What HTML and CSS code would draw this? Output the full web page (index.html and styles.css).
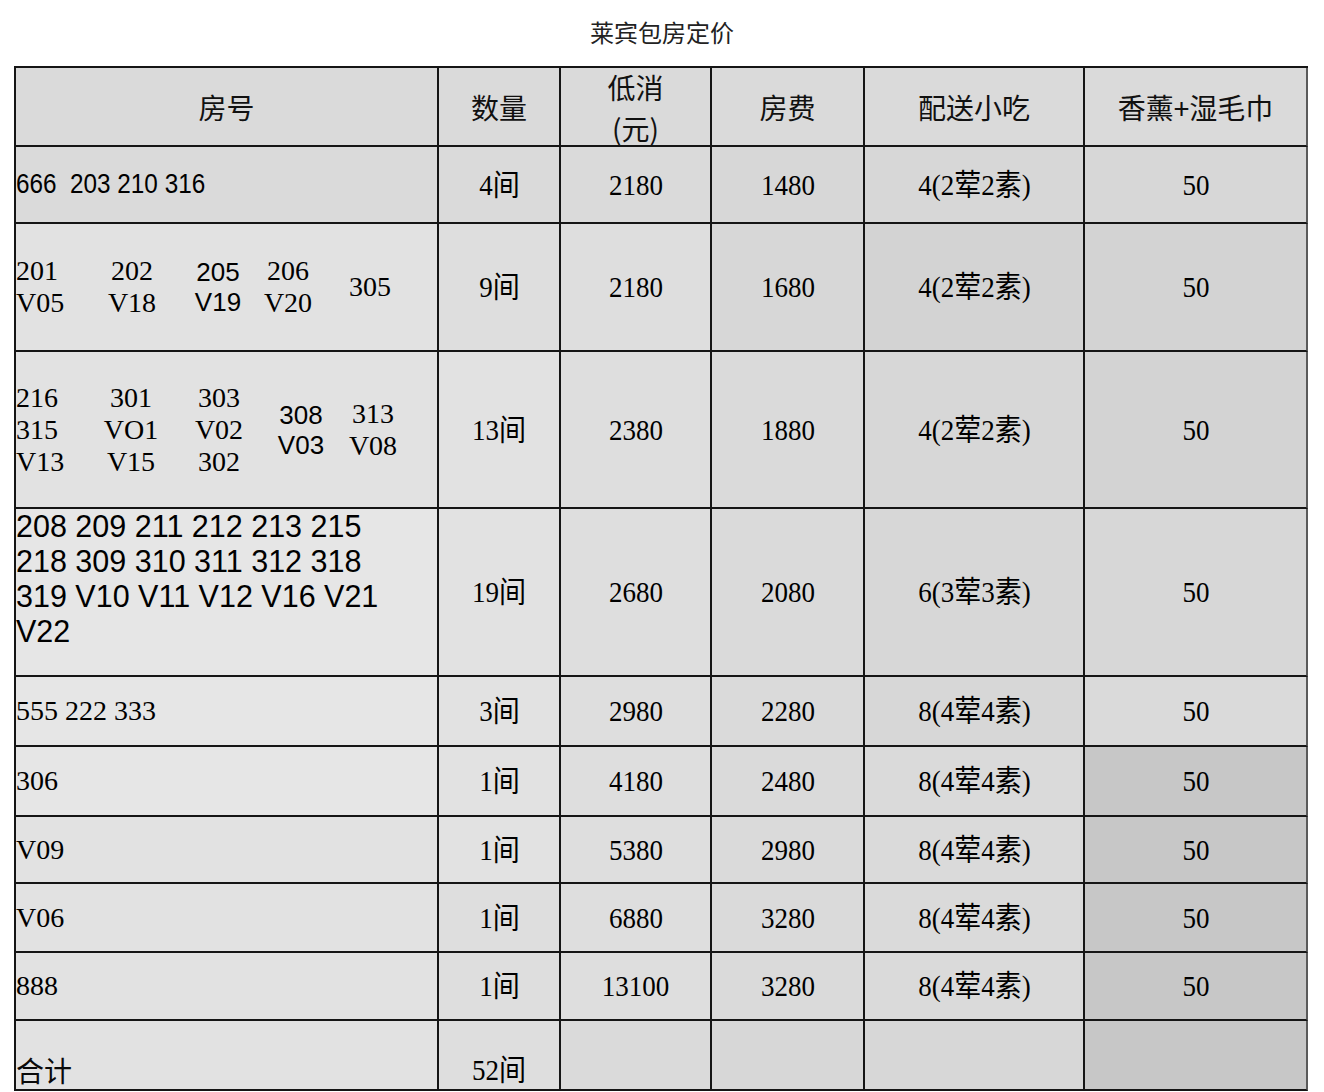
FILE: index.html
```html
<!DOCTYPE html>
<html lang="zh-CN">
<head>
<meta charset="utf-8">
<title>莱宾包房定价</title>
<link rel="stylesheet" href="styles.css">
</head>
<body>
<h1 class="title">莱宾包房定价</h1>
<div class="sheet">
  <!-- header -->
  <div class="c hd t3">房号</div>
  <div class="c hd t3">数量</div>
  <div class="c hd t3 two">低消<br>(元)</div>
  <div class="c hd t3">房费</div>
  <div class="c hd t3">配送小吃</div>
  <div class="c hd t3 last">香薰+湿毛巾</div>

  <!-- row 1 -->
  <div class="c room t3"><span class="sans-n">666  203 210 316</span></div>
  <div class="c t3"><span class="n">4间</span></div>
  <div class="c t3"><span class="n">2180</span></div>
  <div class="c t4"><span class="n">1480</span></div>
  <div class="c t4"><span class="n">4(2荤2素)</span></div>
  <div class="c t4 last"><span class="n">50</span></div>

  <!-- row 2 -->
  <div class="c room t1">
    <div class="rooms rooms-a">
      <div class="rc left">201<br>V05</div>
      <div class="rc">202<br>V18</div>
      <div class="rc sans">205<br>V19</div>
      <div class="rc">206<br>V20</div>
      <div class="rc">305</div>
    </div>
  </div>
  <div class="c t2"><span class="n">9间</span></div>
  <div class="c t2"><span class="n">2180</span></div>
  <div class="c t4"><span class="n">1680</span></div>
  <div class="c t5"><span class="n">4(2荤2素)</span></div>
  <div class="c t5 last"><span class="n">50</span></div>

  <!-- row 3 -->
  <div class="c room t1">
    <div class="rooms rooms-b">
      <div class="rc left">216<br>315<br>V13</div>
      <div class="rc">301<br>VO1<br>V15</div>
      <div class="rc">303<br>V02<br>302</div>
      <div class="rc sans">308<br>V03</div>
      <div class="rc">313<br>V08</div>
    </div>
  </div>
  <div class="c t1"><span class="n">13间</span></div>
  <div class="c t2"><span class="n">2380</span></div>
  <div class="c t3"><span class="n">1880</span></div>
  <div class="c t4"><span class="n">4(2荤2素)</span></div>
  <div class="c t5 last"><span class="n">50</span></div>

  <!-- row 4 -->
  <div class="c room top t0"><div class="big">208 209 211 212 213 215<br>218 309 310 311 312 318<br>319 V10 V11 V12 V16 V21<br>V22</div></div>
  <div class="c t1"><span class="n">19间</span></div>
  <div class="c t2"><span class="n">2680</span></div>
  <div class="c t3"><span class="n">2080</span></div>
  <div class="c t4"><span class="n">6(3荤3素)</span></div>
  <div class="c t4 last"><span class="n">50</span></div>

  <!-- row 5 -->
  <div class="c room t0"><span class="serif">555 222 333</span></div>
  <div class="c t1"><span class="n">3间</span></div>
  <div class="c t2"><span class="n">2980</span></div>
  <div class="c t3"><span class="n">2280</span></div>
  <div class="c t4"><span class="n">8(4荤4素)</span></div>
  <div class="c t3 last"><span class="n">50</span></div>

  <!-- row 6 -->
  <div class="c room t0"><span class="serif">306</span></div>
  <div class="c t1"><span class="n">1间</span></div>
  <div class="c t2"><span class="n">4180</span></div>
  <div class="c t3"><span class="n">2480</span></div>
  <div class="c t3"><span class="n">8(4荤4素)</span></div>
  <div class="c t6 last"><span class="n">50</span></div>

  <!-- row 7 -->
  <div class="c room t1"><span class="serif">V09</span></div>
  <div class="c t1"><span class="n">1间</span></div>
  <div class="c t2"><span class="n">5380</span></div>
  <div class="c t3"><span class="n">2980</span></div>
  <div class="c t3"><span class="n">8(4荤4素)</span></div>
  <div class="c t6 last"><span class="n">50</span></div>

  <!-- row 8 -->
  <div class="c room t1"><span class="serif">V06</span></div>
  <div class="c t2"><span class="n">1间</span></div>
  <div class="c t2"><span class="n">6880</span></div>
  <div class="c t3"><span class="n">3280</span></div>
  <div class="c t3"><span class="n">8(4荤4素)</span></div>
  <div class="c t6 last"><span class="n">50</span></div>

  <!-- row 9 -->
  <div class="c room t1"><span class="serif">888</span></div>
  <div class="c t2"><span class="n">1间</span></div>
  <div class="c t2"><span class="n">13100</span></div>
  <div class="c t3"><span class="n">3280</span></div>
  <div class="c t3"><span class="n">8(4荤4素)</span></div>
  <div class="c t6 last"><span class="n">50</span></div>

  <!-- total -->
  <div class="c room bottom t1"><span class="cjk">合计</span></div>
  <div class="c bottom t2"><span class="n">52间</span></div>
  <div class="c t3"></div>
  <div class="c t4"></div>
  <div class="c t4"></div>
  <div class="c t6 last"></div>
</div>
</body>
</html>
```

FILE: styles.css
```css
html, body {
  margin: 0;
  padding: 0;
  background: #ffffff;
}

body {
  font-family: "Noto Sans CJK SC", "Liberation Sans", sans-serif;
  color: #111;
}

.title {
  margin: 0;
  height: 66px;
  line-height: 64px;
  font-size: 24px;
  font-weight: 400;
  text-align: center;
  color: #222;
  font-family: "Noto Sans CJK SC", sans-serif;
}

.sheet {
  margin-left: 14px;
  width: 1294px;
  display: grid;
  grid-template-columns: 423px 122px 151px 153px 220px 223px;
  grid-template-rows: 79px 77px 128px 157px 168px 70px 70px 67px 69px 68px 70px;
  border-top: 2px solid #151515;
  border-left: 2px solid #151515;
  box-sizing: border-box;
}

.c {
  box-sizing: border-box;
  border-right: 2px solid #151515;
  border-bottom: 2px solid #151515;
  display: flex;
  align-items: center;
  justify-content: center;
  color: #0a0a0a;
}

.c.last {
  border-right-color: #5a5a5a;
}

.c.room {
  justify-content: flex-start;
  padding-left: 0;
}

.c.top {
  align-items: flex-start;
}

.c.bottom {
  align-items: flex-end;
  padding-bottom: 2px;
}

.hd {
  font-family: "Noto Sans CJK SC", sans-serif;
  font-size: 28px;
  line-height: 42px;
  text-align: center;
  color: #111;
}

.hd.two {
  line-height: 41px;
  padding-top: 2px;
}

/* tones */
.t0 { background: #e6e6e6; }
.t1 { background: #e2e2e2; }
.t2 { background: #dedede; }
.t3 { background: #dadada; }
.t4 { background: #d7d7d7; }
.t5 { background: #d3d3d3; }
.t6 { background: #c7c7c7; }

/* condensed serif numbers */
.n {
  display: inline-block;
  font-family: "Liberation Serif", "Noto Sans CJK SC", serif;
  font-size: 30px;
  line-height: 34px;
  transform: scaleX(0.9);
  white-space: nowrap;
  color: #000;
}

.sans-n {
  display: inline-block;
  font-family: "Liberation Sans", sans-serif;
  font-size: 27px;
  white-space: pre;
  transform: scaleX(0.9);
  transform-origin: left center;
  color: #000;
}

.serif {
  font-family: "Liberation Serif", serif;
  font-size: 28px;
  white-space: nowrap;
  color: #000;
}

.cjk {
  font-family: "Noto Sans CJK SC", sans-serif;
  font-size: 28px;
  line-height: 34px;
}

.rooms {
  display: grid;
  align-items: center;
  width: 100%;
  font-family: "Liberation Serif", serif;
  font-size: 28px;
  line-height: 32px;
  color: #000;
}

.rooms-a {
  grid-template-columns: 70px 92px 80px 60px 104px;
}

.rooms-b {
  grid-template-columns: 70px 90px 86px 78px 66px;
}

.rc {
  text-align: center;
  white-space: nowrap;
}

.rc.left {
  text-align: left;
}

.rc.sans {
  font-family: "Liberation Sans", sans-serif;
  font-size: 26px;
  line-height: 30px;
}

.big {
  font-family: "Liberation Sans", sans-serif;
  font-size: 30.5px;
  line-height: 35px;
  white-space: nowrap;
  padding-top: 0;
  color: #000;
}
```
